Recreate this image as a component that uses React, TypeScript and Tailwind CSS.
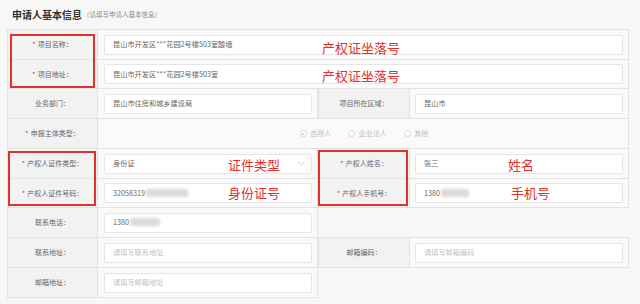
import React from "react";

type HalfProps = {
  label: string;
  req?: boolean;
  side: "left" | "right" | "full";
  children?: React.ReactNode;
  center?: boolean;
};

function Half({ label, req, side, children, center }: HalfProps) {
  const width = side === "full" ? "w-[622px]" : "w-[311px]";
  const labelW = side === "right" ? "w-[91px]" : "w-[90px]";
  const pad = side === "right" ? "pl-[5px] pr-[5px]" : "pl-[6px] pr-[5px]";
  return (
    <div className={`flex ${width} border border-[#e3e3e3] bg-[#fafafa]`}>
      <div
        className={`${labelW} shrink-0 bg-[#f2f2f2] border-r border-[#e3e3e3] flex items-center justify-center text-[7px] text-[#666]`}
      >
        {req && <span className="text-[#e0322b] mr-[2px]">*</span>}
        <span>{label}：</span>
      </div>
      <div className={`flex-1 flex items-center ${center ? "justify-center" : ""} ${pad}`}>
        {children}
      </div>
    </div>
  );
}

function Input({
  children,
  placeholder,
  chevron,
}: {
  children?: React.ReactNode;
  placeholder?: string;
  chevron?: boolean;
}) {
  return (
    <div className="flex-1 h-[20px] bg-white border border-[#e6e6e6] rounded-[2px] flex items-center pl-[8px] pr-[6px] text-[7.2px] text-[#666]">
      {children ? (
        <div className="flex items-center flex-1">{children}</div>
      ) : (
        <div className="flex-1 text-[#c2c2c2]">{placeholder}</div>
      )}
      {chevron && (
        <svg width="7" height="5" viewBox="0 0 7 5" className="shrink-0">
          <path d="M0.5 0.8 L3.5 3.8 L6.5 0.8" fill="none" stroke="#c4c4c4" strokeWidth="0.9" />
        </svg>
      )}
    </div>
  );
}

function Blur({ w }: { w: number }) {
  return (
    <span
      className="inline-block h-[8px] bg-[#dadada] blur-[1.5px] rounded-[2px] ml-[1px]"
      style={{ width: w }}
    />
  );
}

function Radio({ label, checked }: { label: string; checked?: boolean }) {
  return (
    <div className="flex items-center text-[7px] text-[#bdbdbd]">
      <span className="w-[7px] h-[7px] rounded-full border border-[#d6d6d6] bg-white flex items-center justify-center mr-[3.5px]">
        {checked && <span className="w-[2px] h-[2px] rounded-full bg-[#c8c8c8]" />}
      </span>
      <span>{label}</span>
    </div>
  );
}

export default function App() {
  const red = "absolute text-[13px] leading-[13px] text-[#e0322b]";
  return (
    <div className="relative w-[640px] h-[304px] overflow-hidden bg-[#f7f7f7] pl-[7px] font-['Microsoft_YaHei','Noto_Sans_CJK_SC',sans-serif]">
      <div className="h-[29px] flex items-center pl-[5px]">
        <span className="text-[10px] font-bold text-[#333]">申请人基本信息</span>
        <span className="text-[6.5px] text-[#8a8a8a] ml-[1px] mt-[1px]">（请填写申请人基本信息）</span>
      </div>

      <div className="flex flex-col">
        <div className="flex h-[31px]">
          <Half side="full" label="项目名称" req>
            <Input>昆山市开发区***花园2号楼503室酸墙</Input>
          </Half>
        </div>
        <div className="flex h-[30px] -mt-px">
          <Half side="full" label="项目地址" req>
            <Input>昆山市开发区***花园2号楼503室</Input>
          </Half>
        </div>
        <div className="flex h-[31px] -mt-px">
          <Half side="left" label="业务部门">
            <Input>昆山市住房和城乡建设局</Input>
          </Half>
          <Half side="right" label="项目所在区域">
            <Input>昆山市</Input>
          </Half>
        </div>
        <div className="flex h-[31px] -mt-px">
          <Half side="full" label="申报主体类型" req center>
            <div className="flex items-center gap-[17px] ml-[1px]">
              <Radio label="自然人" checked />
              <Radio label="企业法人" />
              <Radio label="其他" />
            </div>
          </Half>
        </div>
        <div className="flex h-[31px] -mt-px">
          <Half side="left" label="产权人证件类型" req>
            <Input chevron>身份证</Input>
          </Half>
          <Half side="right" label="产权人姓名" req>
            <Input>张三</Input>
          </Half>
        </div>
        <div className="flex h-[30px] -mt-px">
          <Half side="left" label="产权人证件号码" req>
            <Input>
              <span>32058319</span>
              <Blur w={42} />
            </Input>
          </Half>
          <Half side="right" label="产权人手机号" req>
            <Input>
              <span>1380</span>
              <Blur w={28} />
            </Input>
          </Half>
        </div>
        <div className="flex h-[31px] -mt-px">
          <Half side="left" label="联系电话">
            <Input>
              <span>1380</span>
              <Blur w={30} />
            </Input>
          </Half>
        </div>
        <div className="flex h-[31px] -mt-px">
          <Half side="left" label="联系地址">
            <Input placeholder="请填写联系地址" />
          </Half>
          <Half side="right" label="邮箱编码">
            <Input placeholder="请填写邮箱编码" />
          </Half>
        </div>
        <div className="flex h-[31px] -mt-px">
          <Half side="left" label="邮箱地址">
            <Input placeholder="请填写邮箱地址" />
          </Half>
        </div>
      </div>

      <div className="absolute left-[10px] top-[34px] w-[85px] h-[54px] border-2 border-[#e0322b]" />
      <div className="absolute left-[8px] top-[151px] w-[88px] h-[55px] border-2 border-[#e0322b]" />
      <div className="absolute left-[318px] top-[150px] w-[90px] h-[56px] border-2 border-[#e0322b]" />

      <div className={`${red} left-[322px] top-[41px]`}>产权证坐落号</div>
      <div className={`${red} left-[322px] top-[69px]`}>产权证坐落号</div>
      <div className={`${red} left-[228px] top-[158px]`}>证件类型</div>
      <div className={`${red} left-[228px] top-[186px]`}>身份证号</div>
      <div className={`${red} left-[508px] top-[158px]`}>姓名</div>
      <div className={`${red} left-[511px] top-[186px]`}>手机号</div>
    </div>
  );
}
